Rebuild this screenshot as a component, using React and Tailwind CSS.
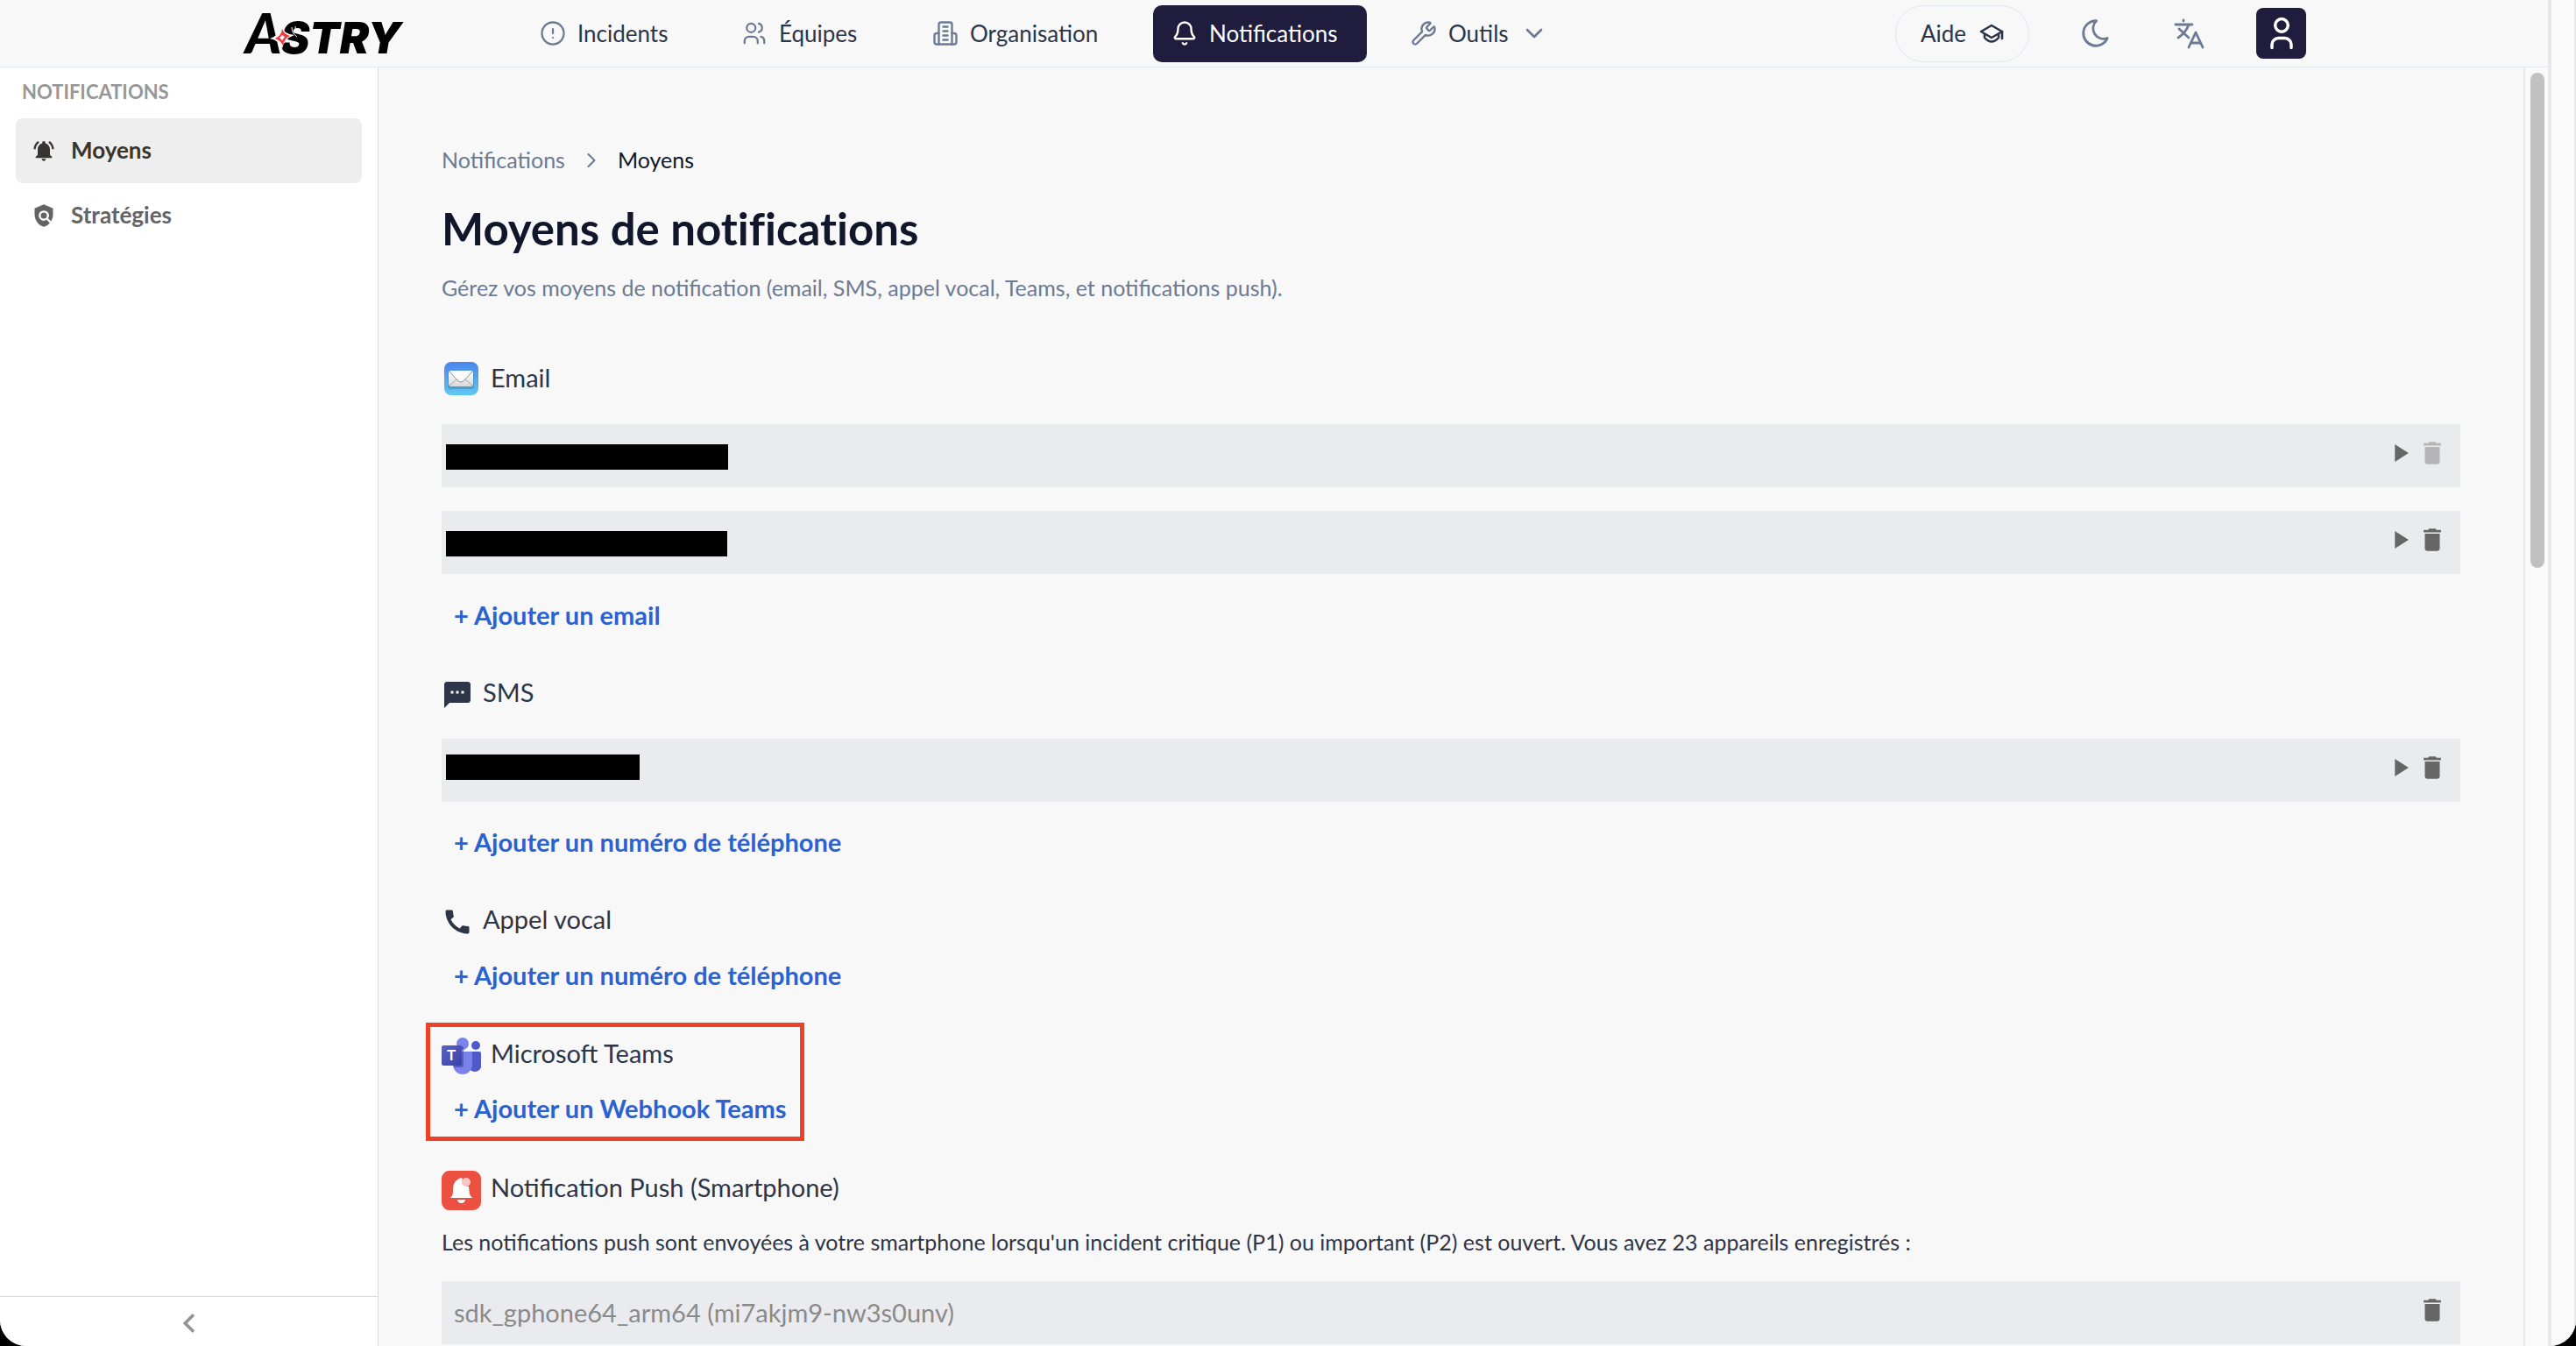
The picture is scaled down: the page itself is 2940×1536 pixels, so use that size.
import { Bell, Wrench } from 'lucide-react';
import { FiAlertCircle } from 'react-icons/fi';
import {
    MdCall,
    MdDelete,
    MdNotificationsActive,
    MdOutlineKeyboardArrowLeft,
    MdPlayArrow,
    MdPolicy,
    MdTextsms
} from 'react-icons/md';
import { TbChevronDown, TbChevronRight, TbMoon, TbUser, TbUsers } from 'react-icons/tb';

const NAV_ITEMS = [
    { label: 'Incidents', icon: AlertIcon, box: 'w-[156px]' },
    { label: 'Équipes', icon: TeamIcon, box: 'ml-[74px] w-[144px]' },
    { label: 'Organisation', icon: BuildingIcon, box: 'ml-[74px] w-[200px]' }
];

function AlertIcon({ className }) {
    return <FiAlertCircle className={className} strokeWidth={1.8} />;
}

function TeamIcon({ className }) {
    return <TbUsers className={className} strokeWidth={1.8} />;
}

function BuildingIcon({ className }) {
    return (
        <svg viewBox="0 0 24 24" className={className} fill="none" stroke="currentColor" strokeWidth="1.9" strokeLinecap="round" strokeLinejoin="round">
            <path d="M6 22V4a2 2 0 0 1 2-2h8a2 2 0 0 1 2 2v18Z" />
            <path d="M6 12H4a2 2 0 0 0-2 2v6a2 2 0 0 0 2 2h2" />
            <path d="M18 12h2a2 2 0 0 1 2 2v6a2 2 0 0 1-2 2h-2" />
            <path d="M10 6h4M10 10h4M10 14h4M10 18h4" />
        </svg>
    );
}

const Logo = () => (
    <a href="#accueil" aria-label="Astry" className="block h-[76px] w-[200px]">
        <svg viewBox="0 0 200 76" className="h-full w-full" fontWeight="900" fontStyle="italic">
            <text x="10" y="61" fontSize="63" fontFamily="Lato, sans-serif">A</text>
            <text x="50" y="61" fontSize="50" fontFamily="Inter, sans-serif">STRY</text>
            <path d="M51 30q3 9 15 10-12 4-14 16-3-10-14-12 11-4 13-14z" fill="#f8f8f8" />
            <path d="M52 33q2 6 9 8-7 3-8 11-3-6-9-8 7-3 8-11z" fill="#f0383e" />
            <path d="M52 40l3 2-3 4-3-3z" fill="#f8f8f8" />
            <path d="M63 31q0 7 6 11M67 30q0 6 6 9" stroke="#f8f8f8" strokeWidth="1" fill="none" />
        </svg>
    </a>
);

const CapIcon = () => (
    <svg viewBox="0 0 32 32" className="size-8" fill="none" stroke="currentColor" strokeWidth="2.6" strokeLinecap="round" strokeLinejoin="round">
        <path d="M4 14L16 7l12 7-12 7z" />
        <path d="M8 17v4q8 9 16 0v-4" />
        <path d="M28 14v8" />
    </svg>
);

const TranslateIcon = () => (
    <svg viewBox="0 0 36 36" className="size-9" fill="none" stroke="currentColor" strokeWidth="2.800" strokeLinecap="round" strokeLinejoin="round">
        <path d="M2 8h19M11 3v1M6 13l11 10M17 8C15 14 11 19 5 23" />
        <path d="M17 34l8-17 8 17M20 29h10" />
    </svg>
);

const MailIcon = () => (
    <svg viewBox="0 0 45 45" className="size-[45px]">
        <defs>
            <linearGradient id="mail-bg" x1="0" y1="0" x2="0" y2="1">
                <stop offset="0" stopColor="#4b84ec" />
                <stop offset="1" stopColor="#5fc8ee" />
            </linearGradient>
            <linearGradient id="mail-paper" x1="0" y1="0" x2="0" y2="1">
                <stop offset="0" stopColor="#ffffff" />
                <stop offset="1" stopColor="#d9d9d9" />
            </linearGradient>
        </defs>
        <rect x="3" y="1" width="39" height="38" rx="8" fill="url(#mail-bg)" />
        <rect x="7" y="13" width="30" height="19" rx="3" fill="#3f7fae" opacity="0.5" />
        <rect x="8" y="11" width="28" height="18" rx="3" fill="url(#mail-paper)" />
        <path d="M9 28l9-8M35 28l-9-8" stroke="#a8a8a8" fill="none" />
        <path d="M9 12l9 10q4 4 8 0l9-10" stroke="#8f8f8f" fill="#fafafa" />
    </svg>
);

const TeamsIcon = () => (
    <svg viewBox="0 0 45 45" className="size-[45px]">
        <defs>
            <linearGradient id="teams-tile" x1="0" y1="0" x2="1" y2="1">
                <stop offset="0" stopColor="#5a62c3" />
                <stop offset="1" stopColor="#3940ab" />
            </linearGradient>
        </defs>
        <circle cx="39" cy="10" r="5" fill="#5059c9" />
        <path d="M31 17h12a2 2 0 0 1 2 2v11a7 7 0 0 1-14 5z" fill="#5059c9" />
        <circle cx="24" cy="8" r="7" fill="#7b83eb" />
        <path d="M14 17h19a2 2 0 0 1 2 2v13a11 11 0 0 1-22 0V18z" fill="#7b83eb" />
        <path d="M17 11h8v22a2 2 0 0 1-2 2h-9z" fill="#3f479f" opacity="0.6" />
        <rect x="0" y="10" width="23" height="23" rx="2" fill="url(#teams-tile)" />
        <text x="11" y="27" fontSize="17" fontWeight="700" fontFamily="Lato, sans-serif" textAnchor="middle" fill="#ffffff">T</text>
    </svg>
);

const PushIcon = () => (
    <svg viewBox="0 0 45 45" className="size-[45px]">
        <rect width="45" height="45" rx="9" fill="#eb5040" />
        <path d="M10 31c3-3 3-5 3-10 0-6 3-10 7-12 1-1 3-1 4 0a6.500 6.500 0 0 0 7 9c1 7 0 9 4 13z" fill="#ffffff" />
        <path d="M18 33h9a4.500 4 0 0 1-9 0z" fill="#ffffff" />
        <circle cx="28" cy="13" r="5" fill="#f9c6c0" />
    </svg>
);

const Header = () => (
    <header className="flex h-[77px] shrink-0 items-center border-b border-[#e2e6ef] pl-[270px] text-[26px] text-[#2d3548]">
        <Logo />
        <nav className="ml-[146px] flex items-center">
            {NAV_ITEMS.map(({ label, icon: Icon, box }) => (
                <a key={label} href={`#${label}`} className={`flex items-center gap-[13px] whitespace-nowrap ${box}`}>
                    <Icon className="size-[30px] shrink-0 text-[#6c7a93]" />
                    {label}
                </a>
            ))}
            <a href="#Notifications" className="ml-[52px] flex h-[65px] w-[244px] items-center gap-[13px] rounded-[10px] bg-[#201c3d] pl-[21px] text-white">
                <Bell className="size-[30px]" strokeWidth={1.9} />
                Notifications
            </a>
            <button type="button" className="ml-[50px] flex items-center gap-[13px]">
                <Wrench className="size-[30px] text-[#6c7a93]" strokeWidth={1.9} />
                Outils
                <TbChevronDown className="size-8 text-[#6c7a93]" strokeWidth={2} />
            </button>
        </nav>
        <div className="mr-[276px] ml-auto flex items-center text-[#6c7a93]">
            <button type="button" className="flex h-[65px] w-[153px] items-center gap-[13px] rounded-full border border-[#e2e6ef] pl-7 text-[#2d3548]">
                Aide
                <CapIcon />
            </button>
            <button type="button" aria-label="Thème sombre" className="ml-[57px]">
                <TbMoon className="size-[38px]" strokeWidth={1.8} />
            </button>
            <button type="button" aria-label="Langue" className="ml-[70px]">
                <TranslateIcon />
            </button>
            <button type="button" aria-label="Profil" className="ml-[58px] flex h-[58px] w-[57px] items-center justify-center rounded-lg bg-[#201c3d] text-white">
                <TbUser className="size-11" strokeWidth={1.9} />
            </button>
        </div>
    </header>
);

const Sidebar = () => (
    <aside className="flex w-[432px] shrink-0 flex-col border-r border-[#d9dadc] bg-white">
        <h2 className="mt-4 pl-[25px] text-[22px] leading-6 font-bold text-[#979797]">NOTIFICATIONS</h2>
        <nav className="mt-[18px] flex flex-col px-[18px] text-[26px] font-bold">
            <a href="#moyens" className="flex h-[74px] items-center gap-[17px] rounded-lg bg-[#eeeeee] pb-px pl-[18px] text-[#36352f]">
                <MdNotificationsActive className="size-7" />
                Moyens
            </a>
            <a href="#strategies" className="flex h-[74px] items-center gap-[17px] pb-px pl-[18px] text-[#646464]">
                <MdPolicy className="size-7" />
                Stratégies
            </a>
        </nav>
        <button type="button" aria-label="Réduire le menu" className="mt-auto flex h-[57px] items-center justify-center border-t border-[#d9dadc] pt-[3px] text-[#949494]">
            <MdOutlineKeyboardArrowLeft className="size-11" />
        </button>
    </aside>
);

const SectionTitle = ({ icon, children }) => (
    <h2 className="flex h-[45px] items-center gap-[11px] pb-px text-[29px] text-[#2d3548]">
        <span className="pt-[6px]">{icon}</span>
        {children}
    </h2>
);

const Row = ({ children, mask, playable = true, locked = false }) => (
    <li className="flex h-[72px] items-center bg-[#eaebef] pr-[15px] text-[#666666]">
        {mask ? <span className={`ml-[5px] h-[29px] bg-black ${mask}`} /> : children}
        <div className="ml-auto flex items-center pb-[7px]">
            {playable && (
                <button type="button" aria-label="Tester">
                    <MdPlayArrow className="size-[34px]" />
                </button>
            )}
            <button type="button" aria-label="Supprimer" disabled={locked} className={locked ? 'ml-[3px] text-[#b5b5b7]' : 'ml-[3px]'}>
                <MdDelete className="size-[34px]" />
            </button>
        </div>
    </li>
);

const AddButton = ({ children, className }) => (
    <button type="button" className={`block pl-[14px] text-[29px] leading-9 font-bold text-[#2a62d3] ${className}`}>
        + {children}
    </button>
);

const Content = () => (
    <main className="min-w-0 flex-1 overflow-hidden px-[72px] pt-[88px]">
        <nav className="flex h-9 items-center text-[25px] text-[#6c7a93]">
            <a href="#notifications">Notifications</a>
            <TbChevronRight className="mx-4 size-7" strokeWidth={1.8} />
            <span className="text-[#10172a]">Moyens</span>
        </nav>
        <h1 className="mt-[25px] text-[51px] leading-[70px] font-bold text-[#10172a] [font-variant-ligatures:none]">Moyens de notifications</h1>
        <p className="mt-[14px] text-[25px] leading-9 text-[#6c7a93]">
            Gérez vos moyens de notification (email, SMS, appel vocal, Teams, et notifications push).
        </p>

        <section className="mt-[63px]">
            <SectionTitle icon={<MailIcon />}>Email</SectionTitle>
            <ul className="mt-[30px] flex flex-col gap-[27px]">
                <Row mask="mt-[3px] w-[322px]" locked />
                <Row mask="mt-[3px] w-[321px]" />
            </ul>
            <AddButton className="mt-[29px]">Ajouter un email</AddButton>
        </section>

        <section className="mt-[48px]">
            <SectionTitle icon={<MdTextsms className="size-9" />}>SMS</SectionTitle>
            <ul className="mt-[30px]">
                <Row mask="mb-2 w-[221px]" />
            </ul>
            <AddButton className="mt-[28px]">Ajouter un numéro de téléphone</AddButton>
        </section>

        <section className="mt-[48px]">
            <SectionTitle icon={<MdCall className="size-9" />}>Appel vocal</SectionTitle>
            <AddButton className="mt-[23px]">Ajouter un numéro de téléphone</AddButton>
        </section>

        <section className="mt-[36px] -ml-[18px] h-[135px] w-[432px] border-[5px] border-[#ed4228] pt-2 pl-[13px]">
            <SectionTitle icon={<TeamsIcon />}>Microsoft Teams</SectionTitle>
            <AddButton className="mt-[22px] whitespace-nowrap">Ajouter un Webhook Teams</AddButton>
        </section>

        <section className="mt-[31px]">
            <SectionTitle icon={<PushIcon />}>Notification Push (Smartphone)</SectionTitle>
            <p className="mt-[21px] text-[25px] leading-9 text-[#2d3548]">
                Les notifications push sont envoyées à votre smartphone lorsqu'un incident critique (P1) ou important (P2) est ouvert. Vous avez 23 appareils enregistrés :
            </p>
            <ul className="mt-[27px]">
                <Row playable={false}>
                    <span className="pb-px pl-[14px] text-[29px] text-[#8a8a8a]">sdk_gphone64_arm64 (mi7akjm9-nw3s0unv)</span>
                </Row>
            </ul>
        </section>
    </main>
);

export default function App() {
    return (
        <div className="h-screen overflow-hidden bg-black font-['Lato',sans-serif]">
            <div className="flex h-full overflow-hidden rounded-b-[30px] bg-[#f8f8f8]">
                <div className="flex min-w-0 flex-1 flex-col">
                    <Header />
                    <div className="flex min-h-0 flex-1">
                        <Sidebar />
                        <Content />
                        <div className="w-7 shrink-0 border-l-2 border-[#e8e8e8] bg-[#fafafa] pt-[6px] pl-[6px]">
                            <div className="h-[565px] w-4 rounded-full bg-[#c1c1c1]" />
                        </div>
                    </div>
                </div>
                <div className="w-8 shrink-0 border-r-2 border-l-4 border-[#e8e8e8] bg-[#fafafa]" />
            </div>
        </div>
    );
}
